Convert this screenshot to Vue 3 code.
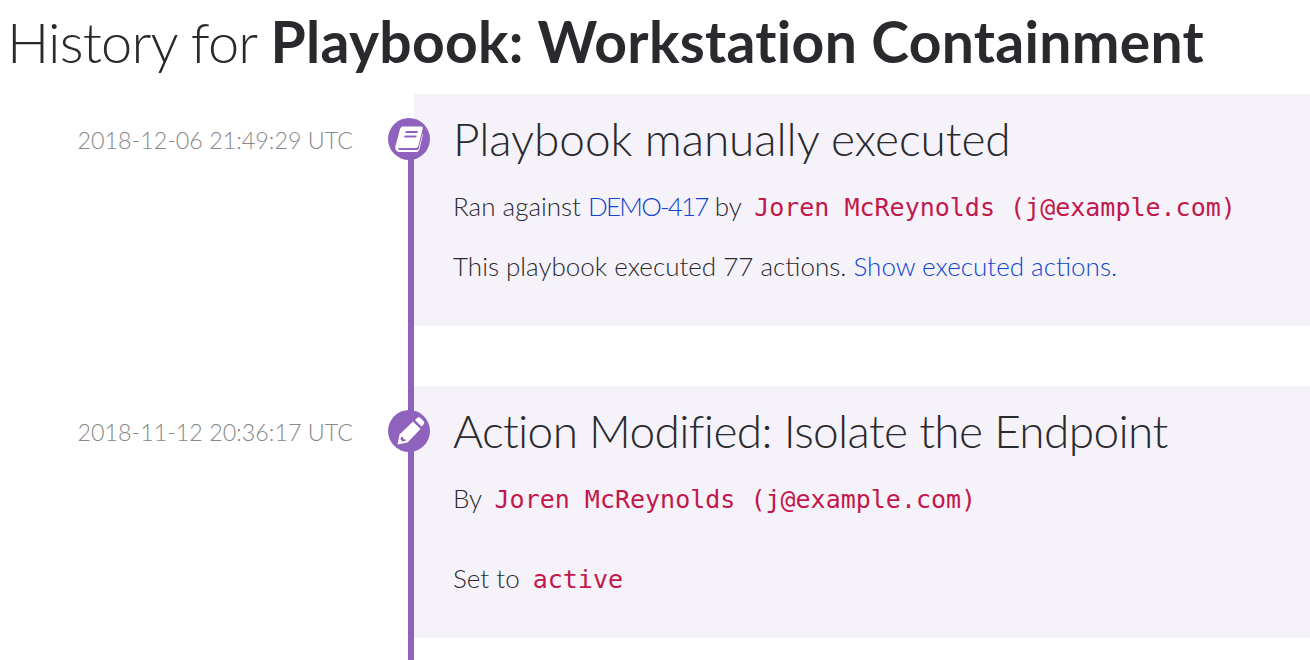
<script setup>
const entries = [
  { time: '2018-12-06 21:49:29 UTC', icon: 'book', title: 'Playbook manually executed', height: 232 },
  { time: '2018-11-12 20:36:17 UTC', icon: 'pencil', title: 'Action Modified: Isolate the Endpoint', height: 252 }
]
</script>

<template>
  <main class="page">
    <h1 class="heading">History for <strong>Playbook: Workstation Containment</strong></h1>
    <div class="timeline">
      <section v-for="(item, index) in entries" :key="index" class="entry">
        <div class="time">{{ item.time }}</div>
        <div class="rail" :class="{ first: index === 0 }">
          <span class="marker" :class="{ firstMarker: index === 0 }">
            <svg v-if="item.icon === 'book'" viewBox="0 0 28 26" width="28" height="26">
              <path fill="#fff" fill-rule="evenodd" d="M8 0.500H26C27.500 0.500 28 1.500 27.600 3L23.500 19.500C23 21.200 22 22 20.500 22H4.500C3.500 22 3 22.500 3.200 23C3.500 23.700 4.300 24 5.200 24H21.500C22.500 24 23.300 23.500 23.700 22.500L27.600 7.500L28 8.500L24.500 23C24 25 22.800 26 21 26H4.500C2 26 0.200 24 0.300 21.500C0.300 20.800 0.400 20.300 0.600 19.700L5 3C5.500 1.400 6.500 0.500 8 0.500ZM10.800 5L10.300 7H22.300L22.800 5ZM9.600 9.500L9.100 11.500H21.100L21.600 9.500Z" />
            </svg>
            <svg v-else class="pencil" viewBox="0 0 28 28" width="28" height="28">
              <path fill="#fff" fill-rule="evenodd" d="M0.500 27.500L2.500 17.500L16 4.500L23.500 12L10.500 25.500ZM4 20L6 20L6.500 22L8.500 22.500L8.500 24L5.500 24.500L3.500 22.500Z" />
              <path fill="#fff" d="M18 3L20 1C21 0 22.500 0 23.500 1L26.500 4C27.500 5 27.500 6.500 26.500 7.500L24.500 9.500Z" />
            </svg>
          </span>
        </div>
        <div class="card" :style="{ height: item.height + 'px' }">
          <h2 class="title" :class="index === 1 ? 'tight' : 'snug'">{{ item.title }}</h2>
          <template v-if="index === 0">
            <p class="line first-line">Ran against <a class="link ticket">DEMO-417</a> by <code class="mono">Joren McReynolds (j@example.com)</code></p>
            <p class="line second-line">This playbook executed 77 actions. <a class="link">Show executed actions.</a></p>
          </template>
          <template v-else>
            <p class="line first-line">By <code class="mono">Joren McReynolds (j@example.com)</code></p>
            <p class="line third-line">Set to <code class="mono">active</code></p>
          </template>
        </div>
      </section>
    </div>
  </main>
</template>

<style scoped>
.page {
  width: 1310px;
  height: 660px;
  overflow: hidden;
  color: #2a2a2e;
  font-family: Lato, "Open Sans", sans-serif;
  font-weight: 300;
}

.heading {
  margin: 0;
  padding-left: 7px;
  height: 94px;
  font-size: 56px;
  line-height: 83px;
  font-weight: 300;
  letter-spacing: -0.8px;
  white-space: nowrap;
}

.heading strong {
  font-size: 57px;
  font-weight: 700;
  letter-spacing: 0.3px;
}

.entry {
  display: flex;
  align-items: stretch;
}

.time {
  width: 353px;
  margin-right: 55px;
  padding-top: 31px;
  text-align: right;
  font-size: 23.3px;
  line-height: 30px;
  color: #888;
  box-sizing: border-box;
  white-space: nowrap;
}

.rail {
  position: relative;
  width: 6px;
  background: #8f62bd;
}

.rail.first {
  margin-top: 40px;
}

.marker {
  position: absolute;
  left: -20px;
  top: 24px;
  width: 42px;
  height: 42px;
  border-radius: 50%;
  background: #8f62bd;
  display: flex;
  align-items: center;
  justify-content: center;
}

.firstMarker {
  top: -16px;
}

.pencil {
  margin-left: 3px;
}

.card {
  flex: 1;
  margin-bottom: 60px;
  padding-left: 39px;
  background: #f5f2fa;
  box-sizing: border-box;
}

.title {
  margin: 0;
  padding-top: 15px;
  font-size: 46px;
  line-height: 60px;
  font-weight: 300;
  white-space: nowrap;
}

.snug {
  letter-spacing: -0.08px;
}

.tight {
  letter-spacing: -0.65px;
}

.line {
  margin: 0;
  font-size: 26px;
  line-height: 36px;
  white-space: nowrap;
}

.first-line {
  margin-top: 19px;
}

.second-line {
  margin-top: 22px;
}

.third-line {
  margin-top: 42px;
}

.link {
  color: #0f45cf;
}

.ticket {
  letter-spacing: -1.8px;
}

.mono {
  margin-left: 6px;
  font-family: "DejaVu Sans Mono", "Liberation Mono", monospace;
  font-size: 25px;
  font-weight: 400;
  color: #c2184b;
}
</style>
